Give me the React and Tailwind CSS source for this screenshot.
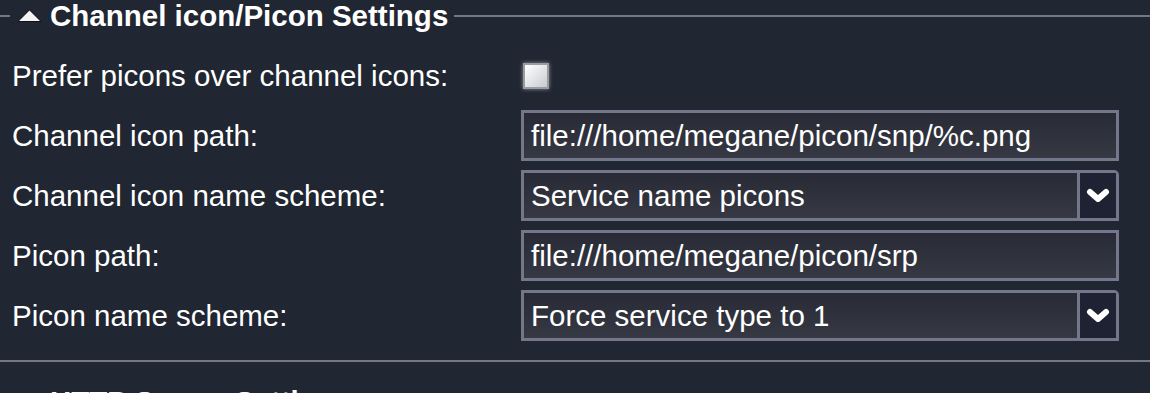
const rows = [
  { label: 'Prefer picons over channel icons:', type: 'check' },
  { label: 'Channel icon path:', type: 'text', value: 'file:///home/megane/picon/snp/%c.png' },
  { label: 'Channel icon name scheme:', type: 'select', value: 'Service name picons' },
  { label: 'Picon path:', type: 'text', value: 'file:///home/megane/picon/srp' },
  { label: 'Picon name scheme:', type: 'select', value: 'Force service type to 1' },
];

function Arrow() {
  return (
    <svg width="27" height="16" viewBox="0 0 27 16" className="mr-[7px] shrink-0">
      <polygon points="13.5,1.5 25.5,14 1.5,14" fill="#111" />
      <polygon points="13.5,2.5 24,13 3,13" fill="#f4f4f4" />
    </svg>
  );
}

function Chevron() {
  return (
    <svg width="24" height="16" viewBox="0 0 24 16">
      <polyline points="4,4 12,11 20,4" fill="none" stroke="#ffffff" strokeWidth="6" strokeLinejoin="round" strokeLinecap="round" />
    </svg>
  );
}

function Field({ row }) {
  if (row.type === 'check') {
    return (
      <div className="h-[51px] flex items-center">
        <div className="ml-[2px] w-[26px] h-[26px] border-2 border-[#9a9ca4] bg-gradient-to-br from-[#ffffff] to-[#c9cbd1] shadow-[0_0_4px_rgba(255,255,255,0.5)]" />
      </div>
    );
  }
  if (row.type === 'select') {
    return (
      <div className="h-[51px] w-[598px] flex border-[3px] border-[#737789] rounded-tr-[5px] bg-gradient-to-b from-[#282b35] to-[#363943]">
        <div className="flex-1 flex items-center px-[7px] pt-[2px] text-white">{row.value}</div>
        <div className="w-[39px] flex items-center justify-center border-l-[3px] border-[#737789] bg-[#1e2233]">
          <Chevron />
        </div>
      </div>
    );
  }
  return (
    <div className="h-[51px] w-[598px] flex items-center border-[3px] border-[#737789] px-[7px] pt-[2px] bg-gradient-to-b from-[#282b35] to-[#363943] text-white">
      {row.value}
    </div>
  );
}

export default function App() {
  return (
    <div className="w-[1150px] h-[393px] overflow-hidden bg-[#202632] text-white text-[29.5px] font-['Liberation_Sans',sans-serif]">
      <fieldset className="border-t-2 border-b-2 border-[#737789] px-[10px] pb-[19px]">
        <legend className="px-[6px] flex items-center font-bold text-[29.5px] leading-[32px]">
          <Arrow />
          Channel icon/Picon Settings
        </legend>
        <div className="mt-[18px] flex flex-col gap-[9px]">
          {rows.map((row) => (
            <div key={row.label} className="flex items-center">
              <div className="w-[511px] shrink-0 pl-[2px] pt-[2px]">{row.label}</div>
              <Field row={row} />
            </div>
          ))}
        </div>
      </fieldset>
      <fieldset className="border-t-2 border-[#737789] mt-[24px] px-[10px]">
        <legend className="px-[6px] flex items-center font-bold text-[29.5px] leading-[32px]">
          <Arrow />
          HTTP Server Settings
        </legend>
      </fieldset>
    </div>
  );
}
